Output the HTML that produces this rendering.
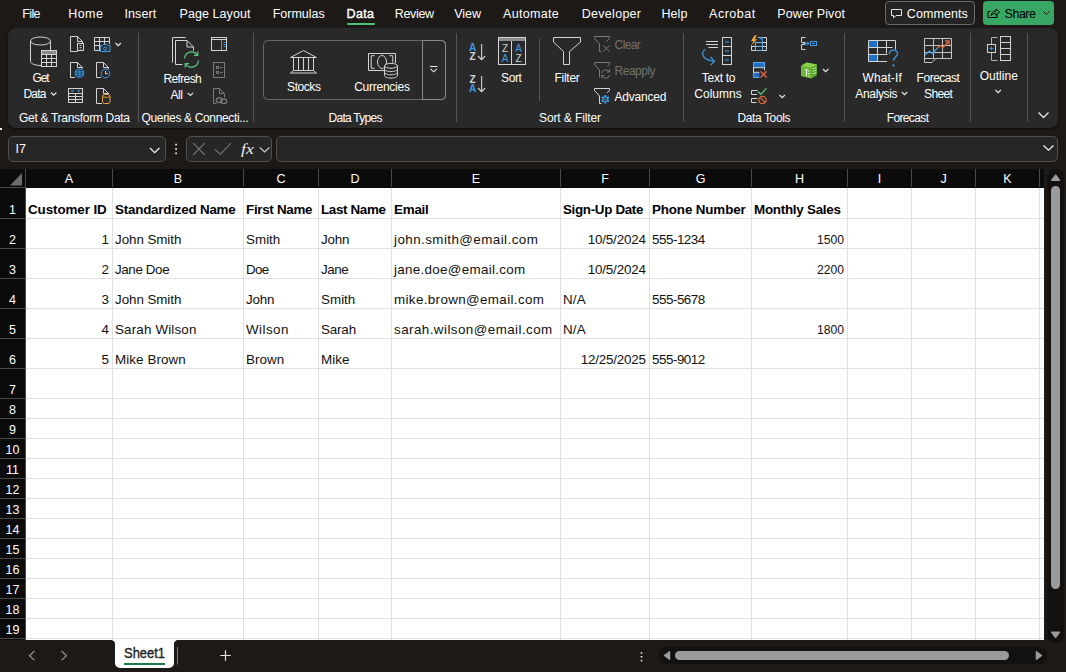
<!DOCTYPE html>
<html lang="en">
<head>
<meta charset="utf-8">
<title>Excel</title>
<style>
*{box-sizing:border-box;margin:0;padding:0}
html,body{width:1066px;height:672px;overflow:hidden;background:#1c1917}
body{position:relative;font-family:"Liberation Sans",sans-serif;color:#fff;font-size:13px}
.abs{position:absolute}
.t{position:absolute;white-space:nowrap;line-height:16px;height:16px}
/* tabs */
#dataul{position:absolute;left:346.500px;top:23px;width:28px;height:2px;background:#4cc274;border-radius:1px}
#comments{position:absolute;left:885px;top:1px;width:90px;height:24px;border:1px solid #6a6a6a;border-radius:4px;background:#242424}
#share{position:absolute;left:983px;top:1px;width:71px;height:24px;border-radius:4px;background:#38a763;color:#000}
/* ribbon */
#ribbon{position:absolute;left:8px;top:28px;width:1050px;height:100px;background:#292929;border-radius:8px;box-shadow:0 1px 2px rgba(0,0,0,.6)}
/* formula bar */
.fbox{position:absolute;top:136px;height:26px;border:1px solid #505050;border-radius:5px;background:#262626}
/* grid */
#grid{position:absolute;left:0;top:169px;width:1044px;height:471px;background:#fff;overflow:hidden}
#colhdr{position:absolute;left:0;top:0;width:1045px;height:19px;background:#0b0b0b}
#rowhdr{position:absolute;left:0;top:0;width:26px;height:471px;background:#0b0b0b;border-right:1px solid #4a4a4a}
.ch{position:absolute;top:0;height:18px;line-height:20px;font-size:12.5px;color:#fff;text-align:center;border-left:1px solid #4a4a4a}
.rh{position:absolute;left:0;width:25px;font-size:12.5px;color:#fff;text-align:center;line-height:14px;height:14px}
.vl{position:absolute;top:19px;width:1px;height:452px;background:#e1e1e1}
.hl{position:absolute;left:26px;height:1px;width:1019px;background:#e1e1e1}
.c{position:absolute;font-size:13.4px;line-height:18px;height:18px;white-space:nowrap;color:#111}
.b{font-weight:bold;color:#000}
.r{text-align:right}
</style>
</head>
<body>
<!-- TABS -->
<div id="dataul"></div>
<div class="abs" style="left:0;top:127.500px;width:1.500px;height:2px;background:#eee"></div>
<div id="comments"></div>
<div id="share"></div>
<!-- RIBBON -->
<div id="ribbon"></div>
<svg class="abs" style="left:0;top:0" width="1066" height="130" viewBox="0 0 1066 130" fill="none" stroke-width="1" stroke-linecap="butt" stroke-linejoin="miter">
<!-- separators -->
<g stroke="#555" shape-rendering="crispEdges">
<path d="M138.5 33V122M253.5 33V122M456.5 33V122M683.5 33V122M844.5 33V122M970.5 33V122M1027.5 33V122M539.5 39V101"/>
</g>
<!-- comments / share icons -->
<g stroke="#e6e6e6">
<path d="M891.5 9.5h10v6h-5.5l-2.5 2.5v-2.5h-2z"/>
</g>
<g stroke="#000">
<path d="M990.5 11.5h-2.500v6h9v-2.500"/><path d="M991 15.500c0.500-3 2.500-4.500 5-4.500v-2l3.500 3.200-3.500 3.200v-2c-2 0-3.500 0.500-5 2.100z"/>
<path d="M1043.500 11.500l3 3 3-3"/>
</g>
<!-- Get Data: cylinder + table -->
<g stroke="#d4d4d4">
<ellipse cx="40.5" cy="41" rx="10" ry="4"/>
<path d="M30.500 41V61.500C30.500 63.500 35 65.500 41 65.500M50.500 41V50.500"/>
<rect x="41.500" y="50.500" width="15" height="16"/>
<path d="M41.500 54.500h15M41.500 58.500h15M41.500 62.500h15M46.500 54.500v12M51.500 54.500v12"/>
<rect x="42" y="51" width="14" height="3" fill="#8c8c8c" stroke="none"/>
</g>
<!-- chevrons -->
<g stroke="#e6e6e6" stroke-width="1.200">
<path d="M51 92.500l2.700 2.700 2.700-2.700"/>
<path d="M115.500 43l2.700 2.700 2.700-2.700"/>
<path d="M187.700 92.800l2.700 2.700 2.700-2.700"/>
</g>
<!-- icon1: file with text box -->
<g stroke="#d4d4d4">
<path d="M77.500 51.500H70.500V36.500H77.500L82.500 41.500V43.500M77.500 36.500V41.500H82.500M77.500 50.500V51.500"/>
<rect x="77.500" y="43.500" width="6" height="7"/>
<path d="M79.500 45.500h2M79.500 47.500h2" stroke="#bdbdbd"/><path d="M79.500 49h2" stroke="#8a8a8a"/>
</g>
<!-- icon2: table + camera -->
<g stroke="#d4d4d4">
<path d="M100 50.500H94.500V37.500H109.500V44M94.500 41.500h15M94.500 45.500h6M99.500 37.500v13M104.500 37.500v6.500"/>
</g>
<g stroke="#3f9ae3">
<path d="M100.500 45.500h2l0.700-1h4.100l0.700 1h2v6h-9.500z"/><circle cx="105.200" cy="48.500" r="1.600"/>
</g>
<!-- icon3: file + globe -->
<g stroke="#d4d4d4">
<path d="M75 77.500H70.500V62.500H77.500L82.500 67.500V68.500M77.500 62.500V67.500H82.500"/>
</g>
<circle cx="79.500" cy="73.200" r="4.800" fill="#3f9ae3"/>
<g stroke="#1f3f5c" stroke-width="0.900"><ellipse cx="79.500" cy="73.200" rx="2" ry="4.300"/><path d="M75 73.200h9M76 70.700h7M76 75.700h7"/></g>
<!-- icon4: file + clock -->
<g stroke="#d4d4d4">
<path d="M101 77.500H96.500V62.500H103.500L108.500 67.500V69M103.500 62.500V67.500H108.500"/>
<path d="M105.500 71v2.700h2.500"/>
</g>
<circle cx="105.500" cy="73.500" r="4.300" stroke="#3f9ae3"/>
<!-- icon5: table with filter arrows -->
<g stroke="#d4d4d4">
<rect x="68.500" y="88.500" width="14" height="14"/>
<path d="M68.500 93.500h14M68.500 96.500h14M68.500 99.500h14M75.500 93.500v9"/>
</g>
<path d="M70.500 90.200h3.600l-1.800 2zM77 90.200h3.600l-1.800 2z" fill="#3f9ae3"/>
<!-- icon6: file + orange db -->
<g stroke="#d4d4d4">
<path d="M102 103.500H96.500V88.500H103.500L108.500 93.500V94M103.500 88.500V93.500H108.500"/>
</g>
<g stroke="#e8a542">
<rect x="102.500" y="94.500" width="7.500" height="9" rx="2"/><path d="M102.500 96.300c0 1.300 7.500 1.300 7.500 0"/>
</g>
<!-- Refresh All -->
<g stroke="#d4d4d4">
<path d="M185.500 37.500H172.500V62.500"/>
<path d="M182.500 64.500H175.500V40.500H187L193.500 47V50.500M187 40.500V47H193.500"/>
</g>
<g stroke="#5cc982" stroke-width="1.200">
<path d="M184.600 58.500a7 7 0 0 1 12.800-3.500"/><path d="M198.400 60.500a7 7 0 0 1-12.800 3.500"/>
<path d="M197.800 51.500v3.800h-3.800"/><path d="M185.200 67.500v-3.800h3.800"/>
</g>
<!-- queries pane -->
<g stroke="#d4d4d4">
<rect x="211.500" y="37.500" width="15" height="13"/><path d="M211.500 39.500h15"/>
</g>
<g stroke="#3f9ae3"><path d="M221.500 40v10"/><path d="M223.500 42.500h2M223.500 44.500h2M223.500 46.500h2"/></g>
<!-- properties (disabled) -->
<g stroke="#7a7a7a">
<rect x="213.500" y="62.500" width="11" height="15"/>
<rect x="216.500" y="66.500" width="2" height="2"/><rect x="216.500" y="71.500" width="2" height="2"/>
<path d="M220 67.500h2.500M220 72.500h2.500"/>
</g>
<!-- edit links (disabled) -->
<g stroke="#7a7a7a">
<path d="M216.500 103.500H213.500V88.500H219.500L224.500 93.500V97.500M219.500 88.500V93.500H224.500"/>
<ellipse cx="219.300" cy="100.200" rx="3.100" ry="2.400" stroke-width="1.200"/>
<ellipse cx="223.700" cy="101.200" rx="3.100" ry="2.400" stroke-width="1.200"/>
</g>

<!-- data types gallery box -->
<g shape-rendering="crispEdges">
<rect x="263.500" y="40.500" width="182" height="59" rx="4" stroke="#666" shape-rendering="auto"/>
<path d="M422.500 40.500V99.500" stroke="#8a8a8a"/>
</g>
<path d="M422.500 40.500H441.500a4 4 0 0 1 4 4V95.500a4 4 0 0 1-4 4H422.500" stroke="#8a8a8a"/>
<!-- stocks: bank -->
<g stroke="#d4d4d4">
<path d="M290.500 57.500L303.500 50.500L316.500 57.500Z"/>
<path d="M293.500 58v12.500M298.500 58v12.500M303.500 58v12.500M308.500 58v12.500M313.500 58v12.500"/>
<path d="M293.500 70.500h20l3 2.500h-26z"/>
</g>
<!-- currencies -->
<g stroke="#d4d4d4">
<path d="M384 70.500H368.500V53.500H395.500V63"/>
<path d="M374.700 55.700h-3.500v12.600h3.500M389.300 55.700h3.500v7"/>
<ellipse cx="382" cy="62" rx="4.500" ry="6.500"/>
<path d="M384.500 65.800v9.700c0 1.500 2.900 2.600 6.500 2.600s6.500-1.100 6.500-2.600v-9.700z" fill="#292929"/>
<ellipse cx="391" cy="65.800" rx="6.500" ry="2.400" fill="#292929"/>
<path d="M384.500 69c0 1.500 2.900 2.600 6.500 2.600s6.500-1.100 6.500-2.600M384.500 72.200c0 1.500 2.900 2.600 6.500 2.600s6.500-1.100 6.500-2.600"/>
</g>
<!-- gallery more -->
<g stroke="#e6e6e6" stroke-width="1.100"><path d="M430 66.500h7.500M430.500 68.800l3.200 3 3.200-3"/></g>
<!-- sort AZ / ZA small icons drawn as text + arrows -->
<g stroke="#d4d4d4" stroke-width="1.100">
<path d="M481.600 44v15.500M478 56l3.600 3.600 3.600-3.600"/>
<path d="M481.600 76v15.500M478 88l3.600 3.600 3.600-3.600"/>
</g>
<!-- Sort big icon -->
<g stroke="#d4d4d4">
<rect x="498.500" y="37.500" width="27" height="27"/>
<path d="M511.500 41v23.500"/>
<rect x="499" y="38" width="26" height="3" fill="#8c8c8c" stroke="none"/>
</g>
<!-- Filter big funnel -->
<g stroke="#d4d4d4">
<path d="M553.500 37.500H580.500V42L569.500 51.500V64.500H563.500V51.500L553.500 42Z"/>
</g>
<!-- Clear (disabled) -->
<g stroke="#7a7a7a">
<path d="M594.500 36.500H609.500V38.500L606.500 41.500M594.500 36.500V38.500L599.500 44V51.500H601.500"/>
<path d="M603.500 45.500l6 6M609.500 45.500l-6 6"/>
</g>
<!-- Reapply (disabled) -->
<g stroke="#7a7a7a">
<path d="M594.500 62.500H609.500V64.500L607.500 66.500M594.500 62.500V64.500L599.500 70V77.500"/>
<path d="M601.700 73a4 4 0 0 1 7.300-1.300M609.500 75a4 4 0 0 1-7.300 1.300"/>
<path d="M609.500 69.200v2.800h-2.800M601.700 78.300v-2.800h2.800"/>
</g>
<!-- Advanced -->
<g stroke="#d4d4d4">
<path d="M594.500 88.500H609.500V90.500L607 93M594.500 88.500V90.500L599.500 96V103.500H601.500"/>
</g>
<g stroke="#3f9ae3">
<circle cx="605.3" cy="99.3" r="2.500" stroke-width="1.300"/>
<path d="M605.30 96.40L605.30 95.10M602.79 97.85L601.66 97.20M602.79 100.75L601.66 101.40M605.30 102.20L605.30 103.50M607.81 100.75L608.94 101.40M607.81 97.85L608.94 97.20" stroke-width="2"/>
</g>
<circle cx="605.3" cy="99.3" r="0.900" fill="#3f9ae3"/>
<g font-family="'Liberation Sans',sans-serif" stroke="none" font-weight="bold" text-anchor="middle">
<text x="472.500" y="50.800" font-size="10" fill="#3f9ae3">A</text>
<text x="472.500" y="60" font-size="10" fill="#d4d4d4">Z</text>
<text x="472.500" y="82.800" font-size="10" fill="#d4d4d4">Z</text>
<text x="472.500" y="92" font-size="10" fill="#3f9ae3">A</text>
<g font-weight="normal" font-size="10">
<text x="505" y="52" fill="#d4d4d4">Z</text>
<text x="505" y="61.700" fill="#3f9ae3">A</text>
<text x="518.500" y="52" fill="#3f9ae3">A</text>
<text x="518.500" y="61.700" fill="#d4d4d4">Z</text>
</g>
</g>

<!-- Text to Columns -->
<g stroke="#d4d4d4">
<path d="M706 41.500h12M706 44.500h12M708.500 47.500h9.500"/>
<rect x="722.500" y="37.500" width="9" height="27"/>
<path d="M722.500 46.500h9M722.500 55.500h9"/>
</g>
<g stroke="#3f9ae3" stroke-width="1.200">
<path d="M725 42h4M725 51h4M725 60h4"/>
<path d="M705.500 49.500c-4.500 2.500-4.500 10.500 8 11.500M710.500 57l4 4.200-4 4"/>
</g>
<!-- flash fill -->
<g stroke="#d4d4d4">
<path d="M758 37.500H766.500V50.500H751.500V45.500M751.500 46.500H755M763 46.500H766.500M763 42.500H766.500M763 37.500"/>
</g>
<g stroke="#6db3ee"><path d="M755.500 42V50.500H762.500V38M755.500 46.500h7M756 42.500h6.500"/></g>
<path d="M759 37.500h4v4.500z" fill="#2b7fd1" stroke="none"/>
<path d="M754.500 35.500l-3.500 5.500h2.500l-2.300 4.500 6-6.200h-2.700l2.500-3.800z" fill="#f0a93b" stroke="none"/>
<!-- remove duplicates -->
<rect x="753.500" y="62.500" width="11" height="15" stroke="#5aa9ea"/>
<rect x="754" y="63" width="10" height="4.500" fill="#1f6fc4" stroke="none"/>
<rect x="754" y="72.500" width="10" height="4.500" fill="#1f6fc4" stroke="none"/>
<path d="M753.500 67.500V72.500M764.500 67.500V72.500M753.500 67.700h11M753.500 72.300h11" stroke="#d4d4d4"/>
<rect x="759.500" y="70.300" width="8" height="8" fill="#292929" stroke="none"/>
<path d="M760.500 71.300l6.200 6.200M766.700 71.300l-6.200 6.200" stroke="#e2673e" stroke-width="1.300"/>
<!-- data validation -->
<g stroke="#d4d4d4">
<path d="M757.500 90.500H751.500V94.500H757M757.500 98.500H751.500V102.500H756.500"/>
</g>
<path d="M758 91.500l2.800 2.800 5.700-6" stroke="#5cc982" stroke-width="1.200"/>
<g stroke="#e2673e" stroke-width="1.200"><circle cx="762.500" cy="100" r="3.700"/><path d="M760 97.500l5 5"/></g>
<g stroke="#e6e6e6" stroke-width="1.200">
<path d="M779.500 95l2.700 2.700 2.700-2.700"/>
<path d="M823 69l2.700 2.700 2.700-2.700"/>
</g>
<!-- consolidate -->
<g stroke="#d4d4d4">
<path d="M805.500 37.500H801.500V42.500H805.500M805.500 44.500H801.500V49.500H805.500"/>
</g>
<g stroke="#3f9ae3">
<rect x="810.500" y="41.500" width="6" height="4"/>
<path d="M803 43.500h6M807 41.500l2 2-2 2M812 43.500h3"/>
</g>
<!-- data model cube -->
<path d="M801 66l5.500-3.500 10.500 2v10.500l-5.500 3.500-10.500-2.500z" fill="#5fa52d" stroke="none"/>
<path d="M801 66l5.500-3.500 10.500 2-5.500 3z" fill="#8ccf4d" stroke="none"/>
<path d="M801 66l10.500 1.500v11l-10.500-2.500z" fill="#6db834" stroke="none"/>
<g stroke="#f2f2f2" stroke-width="1"><path d="M806.500 69v7M805 70.500l1.500-1.500 1.500 1.500"/><path d="M809 70.500v1M809 73v1M809 75.500v1M813.500 68v1M813.500 70.500v1M813.500 73v1M815.500 67.500v1M815.500 70v1M815.500 72.500v1" stroke-width="1.300"/></g>

<!-- What-If -->
<g stroke="#d4d4d4">
<path d="M887 61.500H868.500V40.500H895.500V49.500M868.500 47.500h24M868.500 54.500h19M877.500 40.500v21M886.500 40.500v13"/>
</g>
<rect x="869" y="41" width="8" height="6" fill="#1e6fc6" stroke="none"/>
<rect x="869" y="55" width="8" height="6" fill="#1e6fc6" stroke="none"/>
<g stroke="#3f9ae3" stroke-width="1.300">
<path d="M889.300 54.200c0-2.700 1.800-4 4.100-4s4.100 1.400 4.100 3.600c0 3.200-4 3.300-4 7"/>
</g>
<circle cx="893.500" cy="65.400" r="1.100" fill="#3f9ae3"/>
<!-- Forecast sheet -->
<g stroke="#c4c4c4">
<path d="M924.500 38.500H951.500V58.500H936L932 62.500H924.500ZM924.500 45.500h27M924.500 52.500h27M933.500 38.500v20M942.500 38.500v20M924.500 58.500h11"/>
</g>
<path d="M925 55l4.500-4 3 2.500 4.500-5" stroke="#3f9ae3" stroke-width="1.300"/>
<path d="M937 48.500l3.500-3 2.500 2 5.500-6" stroke="#e2673e" stroke-width="1.300"/>
<path d="M945 41h4v4" stroke="#e2673e" stroke-width="1.300"/>
<!-- Outline -->
<g stroke="#d4d4d4">
<rect x="1000.500" y="36.500" width="10" height="24"/>
<path d="M1000.500 42.500h10M1000.500 48.500h10M1000.500 54.500h10"/>
<path d="M997.500 37.500H991.500V44M991.500 53V60.500H997.500" stroke="#b0b0b0"/>
<rect x="987.500" y="44.500" width="8" height="8"/>
</g>
<path d="M989.500 48.500h4M991.500 46.500v4" stroke="#3f9ae3" stroke-width="1"/>
<g stroke="#e6e6e6" stroke-width="1.200">
<path d="M901.800 92l2.700 2.700 2.700-2.700"/>
<path d="M995.500 90l2.700 2.700 2.700-2.700"/>
<path d="M1038.500 112.500l5 5 5-5" stroke-width="1.300"/>
</g>

</svg>


<!-- FORMULA BAR -->
<div class="fbox" style="left:8px;width:158px"></div>
<div class="fbox" style="left:186px;width:86px"></div>
<div class="fbox" style="left:276px;width:782px"></div>
<svg class="abs" style="left:0;top:128px" width="1066" height="41" viewBox="0 128 1066 41" fill="none">
<path d="M150 148l4.700 4.700 4.700-4.700" stroke="#f0f0f0" stroke-width="1.300"/>
<g fill="#f0f0f0"><rect x="175.200" y="143.700" width="1.700" height="1.700"/><rect x="175.200" y="148.200" width="1.700" height="1.700"/><rect x="175.200" y="152.500" width="1.700" height="1.700"/></g>
<path d="M193.200 143.200l11.600 11.600M204.800 143.200l-11.600 11.600" stroke="#7c7c7c" stroke-width="1.100"/>
<path d="M215 149.300l5.500 5 10.500-11.300" stroke="#7c7c7c" stroke-width="1.100"/>
<path d="M259.800 147.500l4.800 4.500 4.800-4.500" stroke="#c8c8c8" stroke-width="1.200"/>
<path d="M1043.500 145.500l5 4.700 5-4.700" stroke="#f0f0f0" stroke-width="1.300"/>
<text x="241" y="153.500" font-family="'Liberation Serif',serif" font-style="italic" font-size="15.500" fill="#f0f0f0" textLength="12.800" lengthAdjust="spacingAndGlyphs">fx</text>
</svg>

<div class="t" style="left:22.2px;top:6px;font-size:12.5px;letter-spacing:-0.59px">File</div>
<div class="t" style="left:68.3px;top:6px;font-size:12.5px;letter-spacing:0.42px">Home</div>
<div class="t" style="left:124.4px;top:6px;font-size:12.5px;letter-spacing:0.13px">Insert</div>
<div class="t" style="left:179.5px;top:6px;font-size:12.5px;letter-spacing:0.07px">Page Layout</div>
<div class="t" style="left:272.7px;top:6px;font-size:12.5px;letter-spacing:-0.01px">Formulas</div>
<div class="t" style="left:394.8px;top:6px;font-size:12.5px;letter-spacing:-0.34px">Review</div>
<div class="t" style="left:454.2px;top:6px;font-size:12.5px;letter-spacing:-0.02px">View</div>
<div class="t" style="left:503.0px;top:6px;font-size:12.5px;letter-spacing:0.3px">Automate</div>
<div class="t" style="left:581.8px;top:6px;font-size:12.5px;letter-spacing:0.28px">Developer</div>
<div class="t" style="left:661.4px;top:6px;font-size:12.5px;letter-spacing:0.09px">Help</div>
<div class="t" style="left:709.1px;top:6px;font-size:12.5px;letter-spacing:0.5px">Acrobat</div>
<div class="t" style="left:777.3px;top:6px;font-size:12.5px;letter-spacing:0.1px">Power Pivot</div>
<div class="t" style="left:906.8px;top:6px;font-size:12.5px;letter-spacing:0.07px">Comments</div>
<div class="t" style="left:346.6px;top:6px;font-size:12.5px;letter-spacing:0.3px;-webkit-text-stroke:0.400px #fff">Data</div>
<div class="t" style="left:1004.6px;top:6px;font-size:12.5px;letter-spacing:-0.49px;color:#000">Share</div>
<div class="t" style="left:32.5px;top:70px;font-size:12px;letter-spacing:-1.07px">Get</div>
<div class="t" style="left:23.5px;top:86px;font-size:12px;letter-spacing:-0.82px">Data</div>
<div class="t" style="left:163.6px;top:71px;font-size:12px;letter-spacing:-0.66px">Refresh</div>
<div class="t" style="left:170.4px;top:87px;font-size:12px;letter-spacing:-0.42px">All</div>
<div class="t" style="left:287.1px;top:79px;font-size:12px;letter-spacing:-0.44px">Stocks</div>
<div class="t" style="left:354.2px;top:79px;font-size:12px;letter-spacing:-0.25px">Currencies</div>
<div class="t" style="left:501.0px;top:70px;font-size:12px;letter-spacing:-0.37px">Sort</div>
<div class="t" style="left:554.5px;top:70px;font-size:12px;letter-spacing:-0.27px">Filter</div>
<div class="t" style="left:614.6px;top:89px;font-size:12px;letter-spacing:-0.23px">Advanced</div>
<div class="t" style="left:701.8px;top:70px;font-size:12px;letter-spacing:-0.28px">Text to</div>
<div class="t" style="left:694.3px;top:86px;font-size:12px;letter-spacing:0.02px">Columns</div>
<div class="t" style="left:862.5px;top:70px;font-size:12px;letter-spacing:0.09px">What-If</div>
<div class="t" style="left:855.3px;top:86px;font-size:12px;letter-spacing:-0.34px">Analysis</div>
<div class="t" style="left:916.6px;top:70px;font-size:12px;letter-spacing:-0.48px">Forecast</div>
<div class="t" style="left:924.0px;top:86px;font-size:12px;letter-spacing:-0.61px">Sheet</div>
<div class="t" style="left:979.7px;top:68px;font-size:12px;letter-spacing:0.03px">Outline</div>
<div class="t" style="left:614.6px;top:37px;font-size:12px;letter-spacing:-0.62px;color:#717171">Clear</div>
<div class="t" style="left:614.6px;top:63px;font-size:12px;letter-spacing:-0.51px;color:#717171">Reapply</div>
<div class="t" style="left:19.0px;top:110px;font-size:12px;letter-spacing:-0.3px">Get &amp; Transform Data</div>
<div class="t" style="left:141.5px;top:110px;font-size:12px;letter-spacing:-0.35px">Queries &amp; Connecti...</div>
<div class="t" style="left:328.5px;top:110px;font-size:12px;letter-spacing:-0.72px">Data Types</div>
<div class="t" style="left:539.0px;top:110px;font-size:12px;letter-spacing:-0.11px">Sort &amp; Filter</div>
<div class="t" style="left:737.5px;top:110px;font-size:12px;letter-spacing:-0.39px">Data Tools</div>
<div class="t" style="left:886.7px;top:110px;font-size:12px;letter-spacing:-0.63px">Forecast</div>
<div class="t" style="left:15.5px;top:141px;font-size:12.5px;letter-spacing:0.06px">I7</div>

<!-- GRID -->
<div id="grid">
<div id="colhdr"></div><div id="rowhdr"></div>
<div class="vl" style="left:112px"></div>
<div class="vl" style="left:243px"></div>
<div class="vl" style="left:318px"></div>
<div class="vl" style="left:391px"></div>
<div class="vl" style="left:560px"></div>
<div class="vl" style="left:649px"></div>
<div class="vl" style="left:751px"></div>
<div class="vl" style="left:847px"></div>
<div class="vl" style="left:911px"></div>
<div class="vl" style="left:975px"></div>
<div class="vl" style="left:1039px"></div>
<div class="hl" style="top:49px"></div>
<div class="hl" style="top:79px"></div>
<div class="hl" style="top:109px"></div>
<div class="hl" style="top:139px"></div>
<div class="hl" style="top:169px"></div>
<div class="hl" style="top:199px"></div>
<div class="hl" style="top:229px"></div>
<div class="hl" style="top:249px"></div>
<div class="hl" style="top:269px"></div>
<div class="hl" style="top:289px"></div>
<div class="hl" style="top:309px"></div>
<div class="hl" style="top:329px"></div>
<div class="hl" style="top:349px"></div>
<div class="hl" style="top:369px"></div>
<div class="hl" style="top:389px"></div>
<div class="hl" style="top:409px"></div>
<div class="hl" style="top:429px"></div>
<div class="hl" style="top:449px"></div>
<div class="hl" style="top:469px"></div>
<div class="ch" style="left:25px;width:87px">A</div>
<div class="ch" style="left:112px;width:131px">B</div>
<div class="ch" style="left:243px;width:75px">C</div>
<div class="ch" style="left:318px;width:73px">D</div>
<div class="ch" style="left:391px;width:169px">E</div>
<div class="ch" style="left:560px;width:89px">F</div>
<div class="ch" style="left:649px;width:102px">G</div>
<div class="ch" style="left:751px;width:96px">H</div>
<div class="ch" style="left:847px;width:64px">I</div>
<div class="ch" style="left:911px;width:64px">J</div>
<div class="ch" style="left:975px;width:64px">K</div>
<div class="ch" style="left:1039px;width:6px"></div>
<div class="abs" style="left:0;top:18px;width:25px;height:1px;background:#4a4a4a"></div>
<div class="rh" style="top:34px">1</div>
<div class="abs" style="left:0;top:49px;width:25px;height:1px;background:#4a4a4a"></div>
<div class="rh" style="top:64px">2</div>
<div class="abs" style="left:0;top:79px;width:25px;height:1px;background:#4a4a4a"></div>
<div class="rh" style="top:94px">3</div>
<div class="abs" style="left:0;top:109px;width:25px;height:1px;background:#4a4a4a"></div>
<div class="rh" style="top:124px">4</div>
<div class="abs" style="left:0;top:139px;width:25px;height:1px;background:#4a4a4a"></div>
<div class="rh" style="top:154px">5</div>
<div class="abs" style="left:0;top:169px;width:25px;height:1px;background:#4a4a4a"></div>
<div class="rh" style="top:184px">6</div>
<div class="abs" style="left:0;top:199px;width:25px;height:1px;background:#4a4a4a"></div>
<div class="rh" style="top:214px">7</div>
<div class="abs" style="left:0;top:229px;width:25px;height:1px;background:#4a4a4a"></div>
<div class="rh" style="top:234px">8</div>
<div class="abs" style="left:0;top:249px;width:25px;height:1px;background:#4a4a4a"></div>
<div class="rh" style="top:254px">9</div>
<div class="abs" style="left:0;top:269px;width:25px;height:1px;background:#4a4a4a"></div>
<div class="rh" style="top:274px">10</div>
<div class="abs" style="left:0;top:289px;width:25px;height:1px;background:#4a4a4a"></div>
<div class="rh" style="top:294px">11</div>
<div class="abs" style="left:0;top:309px;width:25px;height:1px;background:#4a4a4a"></div>
<div class="rh" style="top:314px">12</div>
<div class="abs" style="left:0;top:329px;width:25px;height:1px;background:#4a4a4a"></div>
<div class="rh" style="top:334px">13</div>
<div class="abs" style="left:0;top:349px;width:25px;height:1px;background:#4a4a4a"></div>
<div class="rh" style="top:354px">14</div>
<div class="abs" style="left:0;top:369px;width:25px;height:1px;background:#4a4a4a"></div>
<div class="rh" style="top:374px">15</div>
<div class="abs" style="left:0;top:389px;width:25px;height:1px;background:#4a4a4a"></div>
<div class="rh" style="top:394px">16</div>
<div class="abs" style="left:0;top:409px;width:25px;height:1px;background:#4a4a4a"></div>
<div class="rh" style="top:414px">17</div>
<div class="abs" style="left:0;top:429px;width:25px;height:1px;background:#4a4a4a"></div>
<div class="rh" style="top:434px">18</div>
<div class="abs" style="left:0;top:449px;width:25px;height:1px;background:#4a4a4a"></div>
<div class="rh" style="top:454px">19</div>
<div class="abs" style="left:0;top:469px;width:25px;height:1px;background:#4a4a4a"></div>
<svg class="abs" style="left:0;top:0" width="25" height="20"><polygon points="22,4 22,16.5 10,16.5" fill="#6b6b6b"/></svg>
<div class="c b" style="left:28px;top:32px;letter-spacing:-0.09px">Customer ID</div>
<div class="c b" style="left:115px;top:32px;letter-spacing:-0.22px">Standardized Name</div>
<div class="c b" style="left:246px;top:32px;letter-spacing:-0.3px">First Name</div>
<div class="c b" style="left:321px;top:32px;letter-spacing:-0.35px">Last Name</div>
<div class="c b" style="left:394px;top:32px;letter-spacing:-0.23px">Email</div>
<div class="c b" style="left:563px;top:32px;letter-spacing:-0.33px">Sign-Up Date</div>
<div class="c b" style="left:652px;top:32px;letter-spacing:-0.14px">Phone Number</div>
<div class="c b" style="left:754px;top:32px;letter-spacing:-0.26px">Monthly Sales</div>
<div class="c r" style="left:25px;width:84.00px;top:62px;">1</div>
<div class="c" style="left:115px;top:62px;letter-spacing:-0.07px">John Smith</div>
<div class="c" style="left:246px;top:62px;letter-spacing:0.02px">Smith</div>
<div class="c" style="left:321px;top:62px;letter-spacing:-0.18px">John</div>
<div class="c" style="left:394px;top:62px;letter-spacing:0.43px">john.smith@email.com</div>
<div class="c r" style="left:560px;width:85.84px;top:62px;letter-spacing:-0.16px">10/5/2024</div>
<div class="c" style="left:652px;top:62px;letter-spacing:-0.48px">555-1234</div>
<div class="c r" style="left:751px;width:93px;top:62px;transform:scaleX(.906);transform-origin:100% 50%">1500</div>
<div class="c r" style="left:25px;width:84.00px;top:92px;">2</div>
<div class="c" style="left:115px;top:92px;letter-spacing:-0.39px">Jane Doe</div>
<div class="c" style="left:246px;top:92px;letter-spacing:-0.74px">Doe</div>
<div class="c" style="left:321px;top:92px;letter-spacing:-0.48px">Jane</div>
<div class="c" style="left:394px;top:92px;letter-spacing:0.31px">jane.doe@email.com</div>
<div class="c r" style="left:560px;width:85.84px;top:92px;letter-spacing:-0.16px">10/5/2024</div>
<div class="c r" style="left:751px;width:93px;top:92px;transform:scaleX(.906);transform-origin:100% 50%">2200</div>
<div class="c r" style="left:25px;width:84.00px;top:122px;">3</div>
<div class="c" style="left:115px;top:122px;letter-spacing:-0.07px">John Smith</div>
<div class="c" style="left:246px;top:122px;letter-spacing:-0.18px">John</div>
<div class="c" style="left:321px;top:122px;letter-spacing:0.02px">Smith</div>
<div class="c" style="left:394px;top:122px;letter-spacing:0.36px">mike.brown@email.com</div>
<div class="c" style="left:563px;top:122px;letter-spacing:0.14px">N/A</div>
<div class="c" style="left:652px;top:122px;letter-spacing:-0.48px">555-5678</div>
<div class="c r" style="left:25px;width:84.00px;top:152px;">4</div>
<div class="c" style="left:115px;top:152px;letter-spacing:0.16px">Sarah Wilson</div>
<div class="c" style="left:246px;top:152px;letter-spacing:0.44px">Wilson</div>
<div class="c" style="left:321px;top:152px;letter-spacing:-0.16px">Sarah</div>
<div class="c" style="left:394px;top:152px;letter-spacing:0.44px">sarah.wilson@email.com</div>
<div class="c" style="left:563px;top:152px;letter-spacing:0.14px">N/A</div>
<div class="c r" style="left:751px;width:93px;top:152px;transform:scaleX(.906);transform-origin:100% 50%">1800</div>
<div class="c r" style="left:25px;width:84.00px;top:182px;">5</div>
<div class="c" style="left:115px;top:182px;letter-spacing:0.08px">Mike Brown</div>
<div class="c" style="left:246px;top:182px;letter-spacing:0.03px">Brown</div>
<div class="c" style="left:321px;top:182px;letter-spacing:0.04px">Mike</div>
<div class="c r" style="left:560px;width:85.81px;top:182px;letter-spacing:-0.19px">12/25/2025</div>
<div class="c" style="left:652px;top:182px;letter-spacing:-0.48px">555-9012</div>
</div>

<!-- BOTTOM -->
<div class="abs" style="left:1047px;top:169px;width:17px;height:474px;border-radius:8px;background:#121110"></div>
<div class="abs" style="left:1051px;top:186px;width:9px;height:403px;border-radius:4.500px;background:#9b9b9b"></div>
<div class="abs" style="left:659px;top:647px;width:388px;height:17px;border-radius:8px;background:#121110"></div>
<div class="abs" style="left:675px;top:651px;width:334px;height:9px;border-radius:4.500px;background:#9b9b9b"></div>
<div class="abs" style="left:115px;top:640px;width:58.500px;height:28px;border-radius:0 0 5px 5px;background:#fff"></div>
<div class="abs" style="left:111px;top:640px;width:4px;height:4px;background:radial-gradient(circle at 0 100%,#1c1917 3.600px,#fff 4.200px)"></div>
<div class="abs" style="left:173.500px;top:640px;width:4px;height:4px;background:radial-gradient(circle at 100% 100%,#1c1917 3.600px,#fff 4.200px)"></div>
<div class="t" style="left:124px;top:644px;font-size:14.400px;line-height:18px;height:18px;color:#222;-webkit-text-stroke:0.350px #222;transform:scaleX(.9);transform-origin:0 50%">Sheet1</div>
<div class="abs" style="left:124.200px;top:663px;width:40.800px;height:2px;background:#1a7d45"></div>
<svg class="abs" style="left:0;top:640px" width="1066" height="32" viewBox="0 640 1066 32" fill="none">
<g stroke="#8f8f8f" stroke-width="1.300"><path d="M34.500 651l-5 4.700 5 4.700M61.500 651l5 4.700-5 4.700"/></g>
<path d="M177.500 647v17.500" stroke="#7a7a7a"/>
<path d="M220.300 655.500h10.400M225.500 650.300v10.400" stroke="#e6e6e6" stroke-width="1.200"/>
<g fill="#e6e6e6"><rect x="640.700" y="652.200" width="1.600" height="1.600"/><rect x="640.700" y="656" width="1.600" height="1.600"/><rect x="640.700" y="659.800" width="1.600" height="1.600"/></g>
<g fill="#9b9b9b" stroke="#9b9b9b" stroke-width="1.500" stroke-linejoin="round">
<path d="M664.500 655.500l5-3.700v7.400z"/><path d="M1041.500 655.500l-5-3.700v7.400z"/>
</g>
</svg>
<svg class="abs" style="left:1045px;top:170px" width="21" height="472" viewBox="1045 170 21 472">
<g fill="#9b9b9b" stroke="#9b9b9b" stroke-width="1.500" stroke-linejoin="round">
<path d="M1055.600 175.200l3.800 5h-7.600z"/><path d="M1055.600 637.300l3.800-5h-7.600z"/>
</g>
</svg>

</body>
</html>
